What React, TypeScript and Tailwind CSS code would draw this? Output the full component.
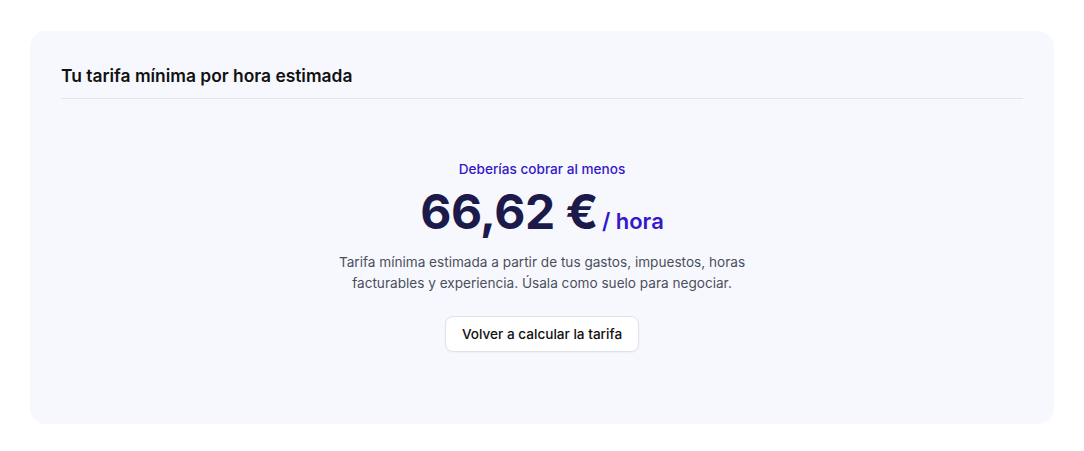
export default function App() {
  return (
    <div className="min-h-screen bg-white px-[30px] pt-[31px] font-['Inter',sans-serif]">
      <div className="rounded-2xl bg-[#f7f8fd] px-[31px] pt-[33px] pb-[72px]">
        <h2 className="border-b border-[#e2e4ec] pb-[10px] text-[17.4px] leading-6 font-semibold text-[#111111]">
          Tu tarifa mínima por hora estimada
        </h2>

        <div className="flex flex-col items-center pt-[60px] text-center">
          <p className="text-[13.6px] leading-5 font-medium text-[#3419c9]">Deberías cobrar al menos</p>
          <div className="mt-[9px] flex items-baseline gap-[4px]">
            <span className="text-[48px] leading-[48px] font-bold tracking-[-0.5px] text-[#1c1a4a]">66,62 €</span>
            <span className="text-[22px] leading-7 font-semibold text-[#3419c9]">/ hora</span>
          </div>
          <p className="mt-[16px] max-w-[420px] text-[13.6px] leading-[21px] text-[#4a4f5c]">
            Tarifa mínima estimada a partir de tus gastos, impuestos, horas facturables y experiencia. Úsala como suelo para negociar.
          </p>
          <button className="mt-[22px] rounded-lg border border-[#e1e3ea] bg-white px-4 py-[7px] text-[13.6px] leading-5 font-medium text-[#111111] shadow-[0_1px_2px_rgba(0,0,0,0.04)]">
            Volver a calcular la tarifa
          </button>
        </div>
      </div>
    </div>
  );
}
